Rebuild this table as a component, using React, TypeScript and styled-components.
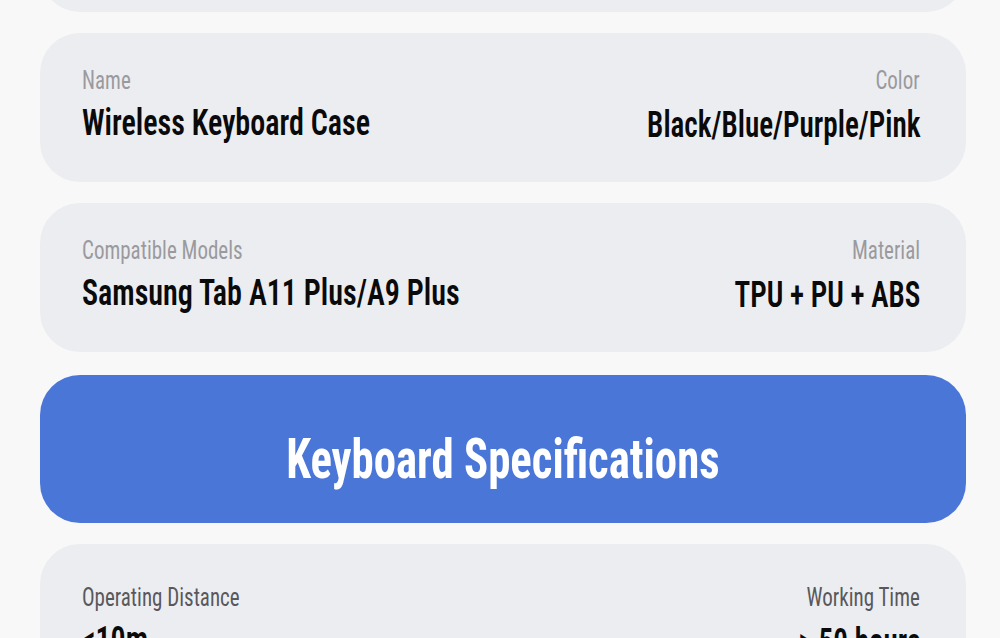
import React from 'react';
import styled, { createGlobalStyle } from 'styled-components';

const GlobalStyle = createGlobalStyle`
  html, body {
    margin: 0;
    padding: 0;
    background: #f8f8f8;
  }
  body {
    font-family: "Roboto Condensed", Roboto, "Liberation Sans", sans-serif;
  }
`;

const Viewport = styled.div`
  width: 1000px;
  height: 638px;
  overflow: hidden;
`;

const Page = styled.div`
  padding: 0 34px 0 40px;
  display: flex;
  flex-direction: column;
  gap: 21px;
  margin-top: -137px;
`;

const Card = styled.div<{ $pt?: number }>`
  background: #ecedf0;
  border-radius: 40px;
  height: 149px;
  flex-shrink: 0;
  box-sizing: border-box;
  padding: ${(p) => p.$pt ?? 35}px 46px 0 42px;
  display: flex;
  justify-content: space-between;
`;

const Col = styled.div<{ $right?: boolean }>`
  display: flex;
  flex-direction: column;
  align-items: ${(p) => (p.$right ? 'flex-end' : 'flex-start')};
  gap: 12px;
`;

const Squeeze = styled.span<{ $right?: boolean; $k: number }>`
  display: inline-block;
  white-space: nowrap;
  transform: scaleX(${(p) => p.$k});
  transform-origin: ${(p) => (p.$right ? 'right' : 'left')} center;
`;

const HeaderText = styled.span`
  display: inline-block;
  white-space: nowrap;
  transform: scaleX(0.8);
  transform-origin: center;
`;

const Label = styled.div<{ $dark?: boolean }>`
  font-size: 25px;
  line-height: 25px;
  color: ${(p) => (p.$dark ? '#58585c' : '#9a9a9e')};
`;

const Value = styled.div<{ $drop?: number }>`
  font-size: 36px;
  line-height: 36px;
  font-weight: 600;
  color: #0a0a0a;
  margin-top: ${(p) => p.$drop ?? 0}px;
`;

const Header = styled.div`
  background: #4a76d8;
  border-radius: 40px;
  height: 148px;
  margin-top: 2px;
  flex-shrink: 0;
  box-sizing: border-box;
  padding-top: 19px;
  display: flex;
  align-items: center;
  justify-content: center;
  color: #fff;
  font-size: 56px;
  line-height: 56px;
  font-weight: 700;
`;

interface SpecProps {
  left: [string, string];
  right: [string, string];
  dark?: boolean;
  pt?: number;
}

function SpecCard({ left, right, dark, pt }: SpecProps) {
  return (
    <Card $pt={pt}>
      <Col>
        <Label $dark={dark}><Squeeze $k={0.84}>{left[0]}</Squeeze></Label>
        <Value><Squeeze $k={0.835}>{left[1]}</Squeeze></Value>
      </Col>
      <Col $right>
        <Label $dark={dark}><Squeeze $right $k={0.84}>{right[0]}</Squeeze></Label>
        <Value $drop={2}><Squeeze $right $k={0.81}>{right[1]}</Squeeze></Value>
      </Col>
    </Card>
  );
}

export default function App() {
  return (
    <>
      <GlobalStyle />
      <Viewport>
        <Page>
          <Card />
          <SpecCard left={['Name', 'Wireless Keyboard Case']} right={['Color', 'Black/Blue/Purple/Pink']} />
          <SpecCard left={['Compatible Models', 'Samsung Tab A11 Plus/A9 Plus']} right={['Material', 'TPU + PU + ABS']} />
          <Header><HeaderText>Keyboard Specifications</HeaderText></Header>
          <SpecCard dark pt={41} left={['Operating Distance', '<10m']} right={['Working Time', '> 50 hours']} />
        </Page>
      </Viewport>
    </>
  );
}
